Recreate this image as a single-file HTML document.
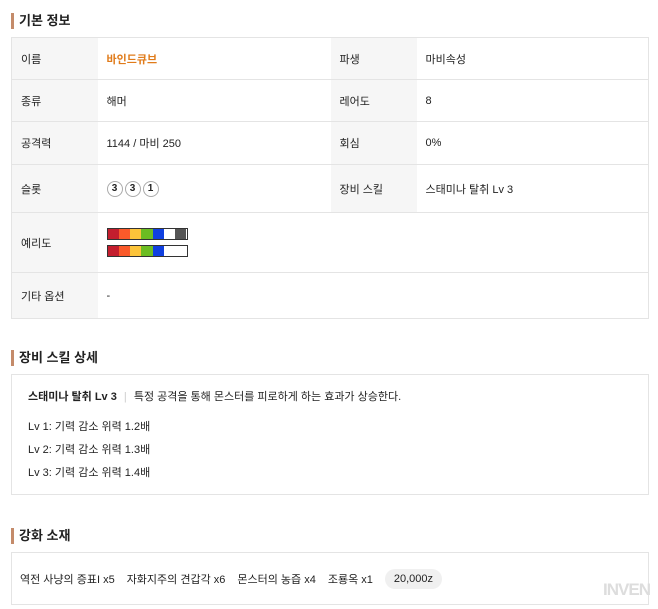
<!DOCTYPE html>
<html><head><meta charset="utf-8"><style>
*{margin:0;padding:0;box-sizing:border-box}
body{width:658px;height:609px;background:#fff;font-family:"Liberation Sans","Noto Sans CJK KR",sans-serif;font-size:11px;color:#222;position:relative;overflow:hidden}
.h{position:absolute;left:11px;font-size:13px;font-weight:bold;padding-left:5px;border-left:3px solid #c48b6a;line-height:16px;color:#222}
table{position:absolute;left:11px;top:37px;width:638px;border-collapse:collapse;border:1px solid #e4e4e4}
td{border-bottom:1px solid #e4e4e4;padding:0 0 0 9px;vertical-align:middle}
td.l{background:#f6f6f6;width:86px}
.slot{display:inline-block;width:16px;height:16px;border:1px solid #aaa;border-radius:50%;text-align:center;line-height:14px;font-size:10px;font-weight:bold;margin-right:2px}
.bar{display:flex;width:81px;height:12px;border:1px solid #333}
.bar i{flex:1;display:block}
.box{position:absolute;left:11px;width:638px;border:1px solid #e4e4e4}
.sk div{line-height:14px}
</style></head><body>
<div class="h" style="top:13px">기본 정보</div>
<table>
<tr style="height:42px"><td class="l">이름</td><td style="width:233px;color:#e07b1a;font-weight:bold">바인드큐브</td><td class="l">파생</td><td>마비속성</td></tr>
<tr style="height:42px"><td class="l">종류</td><td>해머</td><td class="l">레어도</td><td>8</td></tr>
<tr style="height:43px"><td class="l">공격력</td><td>1144 / 마비 250</td><td class="l">회심</td><td>0%</td></tr>
<tr style="height:48px"><td class="l">슬롯</td><td><span class="slot">3</span><span class="slot">3</span><span class="slot">1</span></td><td class="l">장비 스킬</td><td>스태미나 탈취 Lv 3</td></tr>
<tr style="height:60px"><td class="l">예리도</td><td colspan="3">
<div class="bar" style="margin-bottom:5px"><i style="background:#c41e2e"></i><i style="background:#fa5a2a"></i><i style="background:#fcc43a"></i><i style="background:#6cbd22"></i><i style="background:#1040e0"></i><i style="background:#fff"></i><i style="background:#555"></i></div>
<div class="bar"><i style="background:#c41e2e"></i><i style="background:#fa5a2a"></i><i style="background:#fcc43a"></i><i style="background:#6cbd22"></i><i style="background:#1040e0"></i><i style="background:#fff;flex:2"></i></div>
</td></tr>
<tr style="height:46px"><td class="l">기타 옵션</td><td colspan="3">-</td></tr>
</table>
<div class="h" style="top:350px">장비 스킬 상세</div>
<div class="box sk" style="top:374px;height:121px;padding:15px 16px">
<div><b>스태미나 탈취 Lv 3</b> <span style="color:#ccc;margin:0 4px">|</span> 특정 공격을 통해 몬스터를 피로하게 하는 효과가 상승한다.</div>
<div style="margin-top:16px">Lv 1: 기력 감소 위력 1.2배</div>
<div style="margin-top:9px">Lv 2: 기력 감소 위력 1.3배</div>
<div style="margin-top:9px">Lv 3: 기력 감소 위력 1.4배</div>
</div>
<div class="h" style="top:528px">강화 소재</div>
<div class="box" style="top:552px;height:53px;padding:0 8px;display:flex;align-items:center">
<span>역전 사냥의 증표I x5</span><span style="margin-left:12px">자화지주의 견갑각 x6</span><span style="margin-left:12px">몬스터의 농즙 x4</span><span style="margin-left:12px">조룡옥 x1</span>
<span style="margin-left:12px;background:#f0f0f0;border-radius:10px;padding:4px 9px">20,000z</span>
</div>
<div style="position:absolute;right:8px;top:580px;color:#ddd;font-size:17px;font-weight:bold;letter-spacing:-1px">INVEN</div>
</body></html>
